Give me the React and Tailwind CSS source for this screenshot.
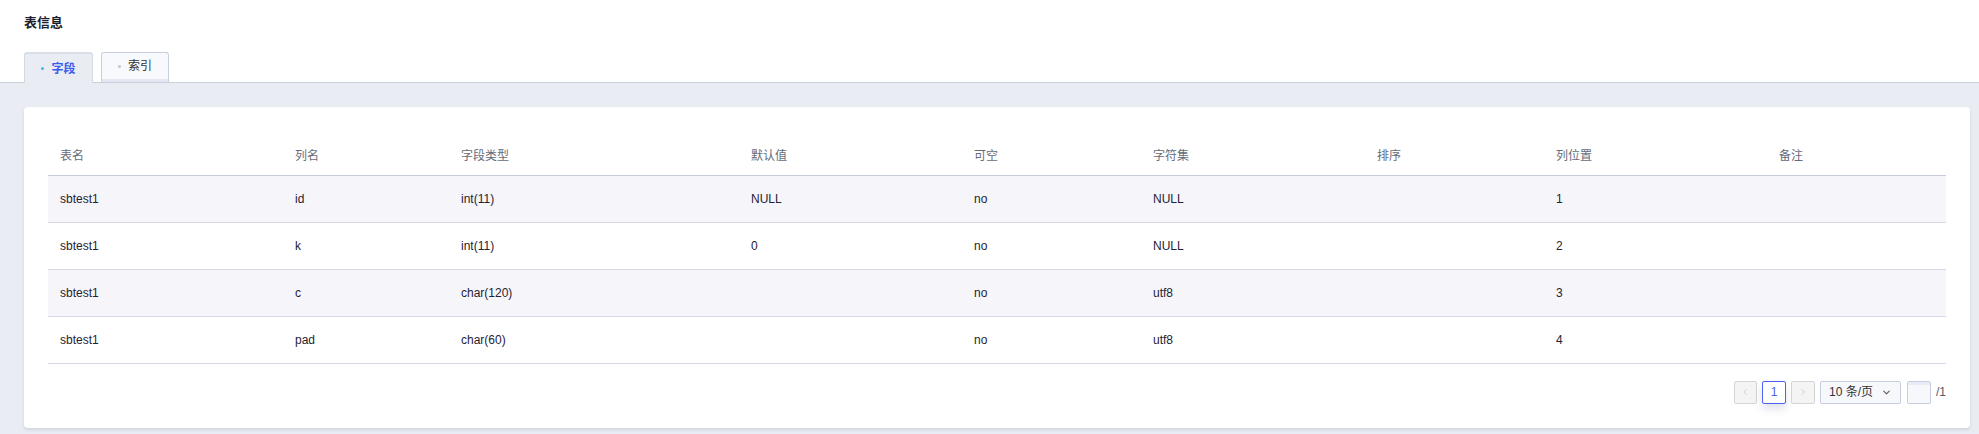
import { ChevronDown, ChevronLeft, ChevronRight } from "lucide-react";

const COLUMNS = [
  { key: "table", label: "表名", width: "w-[235px]" },
  { key: "name", label: "列名", width: "w-[166px]" },
  { key: "type", label: "字段类型", width: "w-[290px]" },
  { key: "def", label: "默认值", width: "w-[223px]" },
  { key: "nullable", label: "可空", width: "w-[179px]" },
  { key: "charset", label: "字符集", width: "w-[224px]" },
  { key: "sort", label: "排序", width: "w-[179px]" },
  { key: "pos", label: "列位置", width: "w-[223px]" },
  { key: "comment", label: "备注", width: "" }
];

const ROWS = [
  { table: "sbtest1", name: "id", type: "int(11)", def: "NULL", nullable: "no", charset: "NULL", sort: "", pos: "1", comment: "" },
  { table: "sbtest1", name: "k", type: "int(11)", def: "0", nullable: "no", charset: "NULL", sort: "", pos: "2", comment: "" },
  { table: "sbtest1", name: "c", type: "char(120)", def: "", nullable: "no", charset: "utf8", sort: "", pos: "3", comment: "" },
  { table: "sbtest1", name: "pad", type: "char(60)", def: "", nullable: "no", charset: "utf8", sort: "", pos: "4", comment: "" }
];

const Tab = ({ label, active }) =>
  active ? (
    <div className="-mb-px flex h-[31px] w-[69px] items-center justify-center gap-[7px] rounded-t-[3px] border border-b-0 border-[#d3d8e5] border-t-2 border-t-[#d9deea] bg-[#e9ecf3] text-[12px] font-semibold text-[#3b5bf0]">
      <span className="h-[3px] w-[3px] rounded-full bg-[#46b4f6]" />
      {label}
    </div>
  ) : (
    <div className="flex h-[30px] w-[68px] flex-col rounded-t-[3px] border border-b-0 border-[#c8cfdc] bg-[#f8f9fc] text-[12px] text-[#333]">
      <div className="flex flex-1 items-center justify-center gap-[7px]">
        <span className="h-[3px] w-[3px] rounded-full bg-[#c4c4c4]" />
        {label}
      </div>
      <div className="h-[3px] bg-[#e3e7f1]" />
    </div>
  );

export default function App() {
  return (
    <div
      className="min-h-[434px] bg-[#e9ecf3]"
      style={{ fontFamily: '"Liberation Sans", "Noto Sans CJK SC", sans-serif' }}
    >
      <div className="bg-white">
        <h1 className="pl-6 pt-[14px] text-[13px] font-bold leading-[18px] text-[#1c1f2e]">表信息</h1>
        <div className="mt-[20px] flex items-end gap-2 border-b border-[#c9cfdc] pl-6">
          <Tab label="字段" active />
          <Tab label="索引" />
        </div>
      </div>

      <div className="pl-6 pr-[9px] pt-6 pb-[7px]">
        <section className="rounded-[4px] bg-white px-6 pb-6 pt-7 shadow-[0_2px_3px_rgba(40,50,80,0.12)]">
          <table className="w-full border-collapse text-left text-[12px]">
            <thead>
              <tr className="h-10 border-b border-[#c6cbd9]">
                {COLUMNS.map((col) => (
                  <th key={col.key} className={`${col.width} px-3 pt-[3px] font-normal text-[#666b78]`}>
                    {col.label}
                  </th>
                ))}
              </tr>
            </thead>
            <tbody>
              {ROWS.map((row, i) => (
                <tr
                  key={row.name}
                  className={`h-[47px] border-b border-[#d6d8e8] ${i % 2 === 0 ? "bg-[#f6f6fa]" : "bg-white"}`}
                >
                  {COLUMNS.map((col) => (
                    <td key={col.key} className="px-3 text-[#1f2233]">
                      {row[col.key]}
                    </td>
                  ))}
                </tr>
              ))}
            </tbody>
          </table>

          <div className="mt-[17px] flex items-center justify-end gap-[5px] text-[12px]">
            <button className="flex h-[23px] w-[23px] items-center justify-center rounded-[2px] border border-[#d5d5d8] bg-[#f4f4f5] text-[#c4c4c8]">
              <ChevronLeft size={10} />
            </button>
            <button className="flex h-[23px] w-[24px] items-center justify-center rounded-[2px] border border-[#4a63f5] bg-white text-[#4a63f5] shadow-[0_5px_8px_rgba(60,70,120,0.15)]">
              1
            </button>
            <button className="flex h-[23px] w-[24px] items-center justify-center rounded-[2px] border border-[#d5d5d8] bg-[#f4f4f5] text-[#c4c4c8]">
              <ChevronRight size={10} />
            </button>
            <div className="flex h-[23px] w-[81px] items-center justify-between rounded-[2px] border border-[#c8cee0] bg-[#f7f8fb] pl-2 pr-2 text-[#333]">
              <span>10 条/页</span>
              <ChevronDown size={11} strokeWidth={2.2} className="text-[#555]" />
            </div>
            <div className="ml-[1px] flex h-[23px] w-[24px] flex-col rounded-[2px] border border-[#c8cee0] bg-[#f7f8fb]">
              <div className="h-[3px] bg-[#e8ebf3]" />
            </div>
            <span className="text-[#555a66]">/1</span>
          </div>
        </section>
      </div>
    </div>
  );
}
